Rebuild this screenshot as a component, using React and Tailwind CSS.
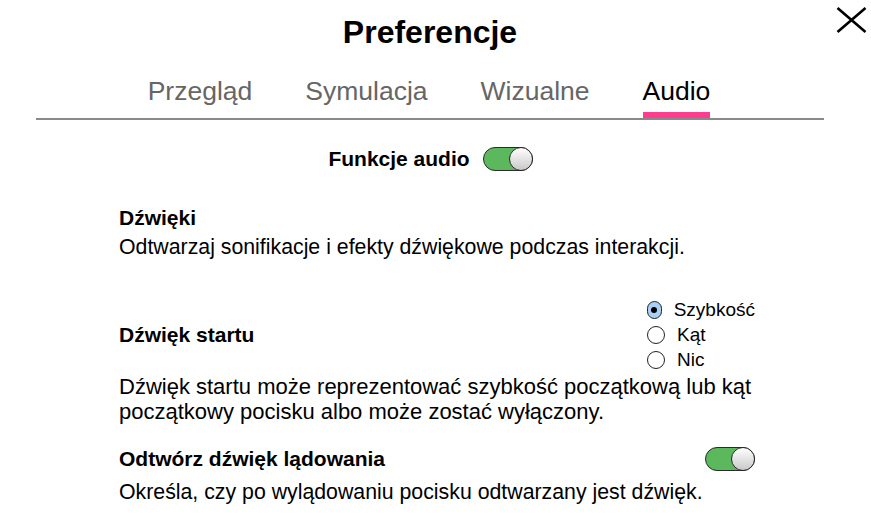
import React, { useState } from 'react';

const tabs = ['Przegląd', 'Symulacja', 'Wizualne', 'Audio'];

const Toggle = ({ on = true }) => (
  <div
    className={`w-[50px] h-[24px] rounded-full border border-[#2b2b2b] flex items-center ${
      on ? 'bg-[#5cb85c] justify-end' : 'bg-[#d6d6d6] justify-start'
    }`}
  >
    <div className="w-[24px] h-[24px] -m-px rounded-full border border-[#2b2b2b] bg-linear-to-b from-white to-[#c9c9c9]" />
  </div>
);

const Radio = ({ checked, label }) => (
  <div className="flex items-center h-[25px]">
    <div
      className={`w-[18px] h-[18px] rounded-full border border-[#222] flex items-center justify-center ${
        checked ? 'bg-[#a9d0f7]' : 'bg-white'
      }`}
    >
      {checked && <div className="w-[6px] h-[6px] rounded-full bg-black" />}
    </div>
    <span className="ml-[12px] text-[19px] leading-[25px] text-black">{label}</span>
  </div>
);

export default function App() {
  const [active] = useState('Audio');
  const [sound, setSound] = useState('Szybkość');

  return (
    <div
      className="relative w-[871px] h-[520px] overflow-hidden bg-white text-black"
      style={{ fontFamily: '"Liberation Sans", Arial, sans-serif' }}
    >
      {/* close */}
      <button className="absolute left-[836px] top-[7px] w-[31px] h-[26px]">
        <svg width="31" height="26" viewBox="0 0 31 26">
          <path d="M1.5 1 L29.5 25 M29.5 1 L1.5 25" stroke="black" strokeWidth="2.6" fill="none" />
        </svg>
      </button>

      {/* header */}
      <div className="ml-[36px] w-[788px] border-b-2 border-[#8a8a8a]">
        <h1 className="pt-[14px] text-center text-[32px] leading-[36px] font-bold">Preferencje</h1>
        <div className="mt-[26px] flex justify-center gap-[53px] ml-[-2px]">
          {tabs.map((t) => (
            <div key={t} className="flex flex-col items-stretch">
              <span
                className={`text-[26.5px] leading-[30px] ${
                  t === active ? 'text-black' : 'text-[#666666]'
                }`}
              >
                {t}
              </span>
              <div className={`mt-[6px] h-[6px] ${t === active ? 'bg-[#ff3d8e]' : 'bg-transparent'}`} />
            </div>
          ))}
        </div>
      </div>

      {/* content */}
      <div className="flex justify-center mt-[27px] ml-[-10px]">
        <div className="flex items-center gap-[13px]">
          <span className="text-[21px] leading-[24px] font-bold">Funkcje audio</span>
          <Toggle />
        </div>
      </div>

      <div className="ml-[119px] w-[640px] text-[21px]">
        <div className="mt-[35px] font-bold leading-[24px]">Dźwięki</div>
        <p className="mt-[5px] text-[21.3px] leading-[24px]">
          Odtwarzaj sonifikacje i efekty dźwiękowe podczas interakcji.
        </p>

        <div className="mt-[38px] flex items-center justify-between pr-[4px]">
          <span className="font-bold leading-[24px]">Dźwięk startu</span>
          <div className="flex flex-col w-[108px]" onClick={() => setSound(sound)}>
            {['Szybkość', 'Kąt', 'Nic'].map((o) => (
              <Radio key={o} label={o} checked={o === sound} />
            ))}
          </div>
        </div>
        <p className="mt-[2px] w-[660px] text-[22px] leading-[25px]">
          Dźwięk startu może reprezentować szybkość początkową lub kąt początkowy pocisku albo może
          zostać wyłączony.
        </p>

        <div className="mt-[23px] flex items-center justify-between pr-[4px]">
          <span className="font-bold leading-[24px]">Odtwórz dźwięk lądowania</span>
          <Toggle />
        </div>
        <p className="mt-[9px] text-[21.3px] leading-[24px]">
          Określa, czy po wylądowaniu pocisku odtwarzany jest dźwięk.
        </p>
      </div>
    </div>
  );
}
